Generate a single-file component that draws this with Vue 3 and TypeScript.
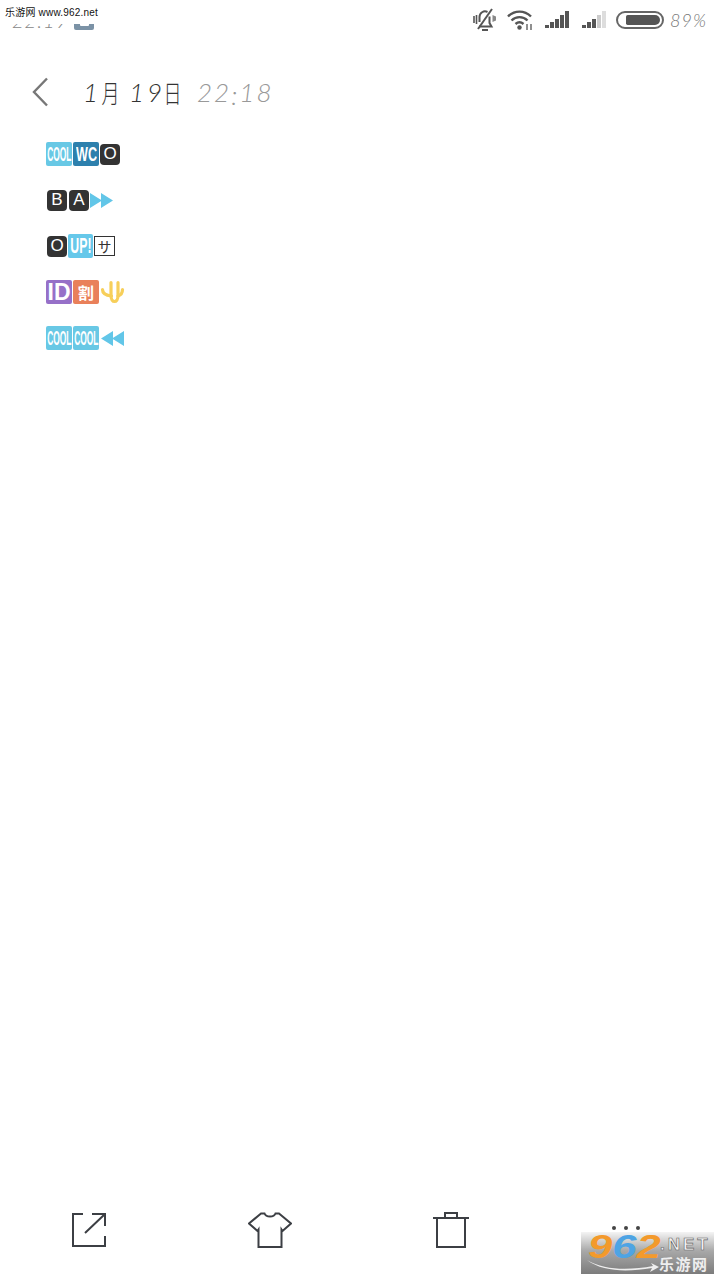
<template>
  <div class="screen">
    <div class="status-bar">
      <div class="status-left">
        <span class="clock">22:19</span>
        <span class="shot-icon">
          <svg width="20" height="22" viewBox="0 0 20 22"><rect x="6" y="11" width="9" height="7" rx="1" fill="#fff" /></svg>
        </span>
      </div>
      <div class="status-right">
        <svg class="bell" width="24" height="26" viewBox="0 0 24 26" fill="none" stroke="#555" stroke-width="2">
          <path d="M6 19.500h12.500l-2-3.500V9.500" />
          <path d="M6.500 15V10a5.500 5.500 0 0 1 8-5M9 23h6" />
          <path d="M5 22 19 2" />
          <path d="M1 9v7M3.500 8v9" stroke-width="1.600" />
          <path d="M19.500 8l3.500 1.500v4L19.500 15z" fill="#888" stroke="none" />
        </svg>
        <svg class="wifi" width="27" height="22" viewBox="0 0 27 22" fill="none" stroke="#555" stroke-width="2.400">
          <path d="M1 7.500C7.500 1 17.500 1 24 7.500M4.500 11.500c4.500-4.500 11.500-4.500 16 0M8.500 15c2.500-2.300 5.500-2.300 8 0" />
          <circle cx="12.500" cy="18.500" r="2.200" fill="#555" stroke="none" />
          <path d="M20 15v6M24 15v6" stroke-width="1.300" />
        </svg>
        <svg class="signal" width="25" height="18" viewBox="0 0 25 18">
          <rect x="0" y="14" width="4" height="3" fill="#555" />
          <rect x="5" y="11" width="4" height="6" fill="#555" />
          <rect x="10" y="8" width="4" height="9" fill="#555" />
          <rect x="15" y="4" width="4" height="13" fill="#555" />
          <rect x="20" y="0" width="4" height="17" fill="#555" />
        </svg>
        <svg class="signal second" width="25" height="18" viewBox="0 0 25 18">
          <rect x="0" y="14" width="4" height="3" fill="#555" />
          <rect x="5" y="11" width="4" height="6" fill="#555" />
          <rect x="10" y="8" width="4" height="9" fill="#555" />
          <rect x="15" y="4" width="4" height="13" fill="#ccc" />
          <rect x="20" y="0" width="4" height="17" fill="#ddd" />
        </svg>
        <span class="battery"><span class="battery-fill" :style="{ width: battery * 0.96 + '%' }"></span></span>
        <span class="battery-text">{{ battery }}%</span>
      </div>
    </div>

    <div class="title-row">
      <svg class="back" width="17" height="30" viewBox="0 0 17 30" fill="none" stroke="#777" stroke-width="2.400">
        <path d="M15 1.500 2 15l13 13.500" />
      </svg>
      <span class="date">
        <span class="num one">1</span>
        <span class="cjk"><em>月</em></span>
        <span class="num nine">19</span>
        <span class="cjk"><em>日</em></span>
      </span>
      <span class="time">22<span class="colon">:</span>18</span>
    </div>

    <div class="emoji-list">
      <div class="emoji-row">
        <span class="badge wide cyan"><i>COOL</i></span>
        <span class="badge wide blue"><i class="bold">WC</i></span>
        <span class="badge dark">O</span>
      </div>
      <div class="emoji-row row-small">
        <span class="badge dark">B</span>
        <span class="badge dark">A</span>
        <svg class="arrows" width="23" height="15" viewBox="0 0 23 15" fill="#62c6e8"><path d="M0 0l12 7.500L0 15zM11 0l12 7.500L11 15z" /></svg>
      </div>
      <div class="emoji-row row-mixed">
        <span class="badge dark">O</span>
        <span class="badge up"><i class="bold up-text">UP!</i></span>
        <span class="badge sa">サ</span>
      </div>
      <div class="emoji-row">
        <span class="badge wide purple"><i class="id">ID</i></span>
        <span class="badge wide orange">割</span>
        <svg class="yu" width="25" height="25" viewBox="0 0 25 25" fill="none" stroke="#f7cf5a" stroke-width="3.200" stroke-linecap="round">
          <path d="M2.500 9.500c0 4 4 6 9 6.500" />
          <path d="M18 16c3-1 4.500-3 4.500-6.500" />
          <path d="M11 2.500v13c0 8 7 8 7 0v-13" />
        </svg>
      </div>
      <div class="emoji-row">
        <span class="badge wide cyan"><i>COOL</i></span>
        <span class="badge wide cyan"><i>COOL</i></span>
        <svg class="arrows back-arrows" width="23" height="15" viewBox="0 0 23 15" fill="#62c6e8"><path d="M23 0 11 7.500 23 15zM12 0 0 7.500 12 15z" /></svg>
      </div>
    </div>

    <div class="toolbar">
      <svg class="tool share" width="34" height="34" viewBox="0 0 34 34" fill="none" stroke="#3c3f44" stroke-width="2">
        <path d="M11 1H1v32h32V23M33 13V1H20M33 1 13 20" />
      </svg>
      <svg class="tool shirt" width="44" height="36" viewBox="0 0 44 36" fill="none" stroke="#3c3f44" stroke-width="2">
        <path d="M13 1.500 1 11.500l8.500 7.500 1-1.500V35h23V17.500l1 1.500L43 11.500 31 1.500h-3.500c-1.500 4-9.500 4-11 0z" />
      </svg>
      <svg class="tool trash" width="38" height="36" viewBox="0 0 38 36" fill="none" stroke="#3c3f44" stroke-width="2">
        <path d="M1 6h36M5 6v29h28V6M13 6V1h12v5" />
      </svg>
    </div>

    <div class="site-mark">乐游网 www.962.net</div>
    <div class="logo">
      <span class="dots"><b></b><b></b><b></b></span>
      <div class="digits"><span class="n1">9</span><span class="n2">6</span><span class="n3">2</span></div>
      <span class="net">.NET</span>
      <svg class="swoosh" width="72" height="14" viewBox="0 0 72 14"><path d="M0 1c18 11 44 10 66 6l-2-3 8 4-9 5 2-4C40 13 16 13 0 1z" fill="#eee" /></svg>
      <span class="logo-cn">乐游网</span>
    </div>
  </div>
</template>

<script setup lang="ts">
const battery = 89
</script>

<style>
html,
body {
  background: #fff;
}
</style>

<style scoped>
.screen {
  position: relative;
  width: 720px;
  height: 1280px;
  background: #fff;
  display: flex;
  flex-direction: column;
  overflow: hidden;
  font-family: "Liberation Sans", "Noto Sans CJK JP", sans-serif;
}

.status-bar {
  height: 40px;
  display: flex;
  justify-content: space-between;
  padding: 0 13px 0 12px;
}

.status-left {
  display: flex;
  align-items: flex-start;
}

.clock {
  width: 62px;
  margin-top: 8px;
  font: italic 300 20px/24px Lato, sans-serif;
  letter-spacing: 1px;
  color: #888;
}

.shot-icon {
  width: 20px;
  height: 22px;
  margin-top: 8px;
  background: #7b92a6;
  border-radius: 2px;
}

.status-right {
  display: flex;
  align-items: center;
}

.bell {
  margin-right: 10px;
}

.wifi {
  margin-right: 11px;
}

.signal {
  margin-right: 12px;
}

.signal.second {
  margin-right: 9px;
}

.battery {
  width: 48px;
  height: 18px;
  box-sizing: border-box;
  border: 2px solid #666;
  border-radius: 9px;
  padding: 2px;
  margin-right: 6px;
  display: flex;
}

.battery-fill {
  display: block;
  background: #555;
  border-radius: 2px 6px 6px 2px;
  margin-left: auto;
}

.battery-text {
  width: 37px;
  font: italic 300 18px/24px Lato, sans-serif;
  letter-spacing: 1px;
  color: #777;
  white-space: nowrap;
}

.title-row {
  margin-top: 36px;
  height: 32px;
  display: flex;
  align-items: center;
  padding-left: 32px;
}

.back {
  margin-right: 34px;
}

.date {
  width: 114px;
  display: flex;
  align-items: center;
  color: #333;
  white-space: nowrap;
}

.num {
  flex: none;
  font: italic 300 26px/32px Lato, sans-serif;
}

.one {
  width: 18px;
}

.nine {
  width: 34px;
  letter-spacing: 3px;
  margin-left: 10px;
}

.cjk {
  flex: none;
  width: 18px;
  display: flex;
  justify-content: center;
  font: 300 25px/32px "Noto Sans CJK JP", sans-serif;
}

.cjk em {
  flex: none;
  font-style: normal;
  transform: scaleX(0.72);
}

.time {
  font: italic 300 26px/32px Lato, sans-serif;
  letter-spacing: 2px;
  color: #999;
  white-space: nowrap;
}

.colon {
  display: inline-block;
  transform: translateY(3px);
}

.emoji-list {
  margin-top: 33px;
  padding-left: 46px;
  display: flex;
  flex-direction: column;
  gap: 20px;
}

.emoji-row {
  height: 26px;
  display: flex;
  align-items: center;
  gap: 1px;
}

.row-small {
  gap: 2px;
  padding-left: 1px;
}

.row-mixed {
  padding-left: 1px;
}

.badge {
  display: flex;
  align-items: center;
  justify-content: center;
  width: 20px;
  height: 21px;
  border-radius: 4px;
  color: #fff;
  font-size: 17px;
  overflow: hidden;
  flex: none;
}

.badge i {
  flex: none;
  font-style: normal;
  font-weight: 700;
  font-size: 21px;
  transform: scaleX(0.4);
  white-space: nowrap;
}

.badge i.bold {
  transform: scaleX(0.6);
}

.badge i.up-text {
  font-size: 22px;
  transform: scaleX(0.56);
}

.badge i.id {
  font-size: 23px;
  transform: scaleX(1);
}

.wide {
  width: 26px;
  height: 24px;
  border-radius: 2px;
}

.cyan {
  background: #68c8e5;
}

.blue {
  background: #2d80ad;
}

.dark {
  background: #333;
}

.purple {
  background: #9670c8;
}

.orange {
  background: #e9805a;
  font-weight: 700;
  font-size: 16px;
}

.up {
  width: 25px;
  height: 24px;
  background: #66c8ea;
  border-radius: 2px;
}

.sa {
  width: 21px;
  height: 20px;
  box-sizing: border-box;
  border: 1px solid #333;
  border-radius: 0;
  background: #fff;
  color: #333;
  font-size: 14px;
}

.arrows {
  margin-left: -1px;
}

.back-arrows {
  margin-left: 1px;
}

.yu {
  flex: none;
}

.toolbar {
  margin-top: auto;
  height: 68px;
  padding-left: 72px;
  display: flex;
  align-items: flex-start;
}

.share {
  margin: 1px 142px 0 0;
}

.shirt {
  margin-right: 140px;
}

.logo {
  position: absolute;
  left: 581px;
  top: 1232px;
  width: 133px;
  height: 42px;
  background: linear-gradient(#f4f4f4, #a8a8a8 45%, #7c7c7c);
}

.dots {
  position: absolute;
  left: 31px;
  top: -6px;
  display: flex;
  gap: 8px;
}

.dots b {
  width: 4px;
  height: 4px;
  border-radius: 50%;
  background: #444;
}

.digits {
  position: absolute;
  left: 7px;
  top: 1px;
  display: flex;
  font: italic 700 33px/28px "Liberation Sans", sans-serif;
  transform: scaleX(1.32);
  transform-origin: left center;
}

.n1,
.n3 {
  color: #f39a2c;
}

.n2 {
  color: #4ea4e4;
}

.net {
  position: absolute;
  left: 79px;
  top: 5px;
  font: 700 17px/16px "Liberation Sans", sans-serif;
  letter-spacing: 3px;
  color: #f4f4f4;
  -webkit-text-stroke: 0.6px #666;
}

.swoosh {
  position: absolute;
  left: 6px;
  top: 27px;
}

.logo-cn {
  position: absolute;
  left: 78px;
  top: 23px;
  font: 700 15px/18px "Noto Sans CJK SC", sans-serif;
  letter-spacing: 1.500px;
  color: #eee;
  white-space: nowrap;
}

.site-mark {
  position: absolute;
  left: 5px;
  top: 6px;
  padding: 0 1px 5px 0;
  font: 10px/13px "Liberation Sans", "Noto Sans CJK SC", sans-serif;
  letter-spacing: 0.2px;
  color: #111;
  background: #fff;
  white-space: nowrap;
}
</style>
